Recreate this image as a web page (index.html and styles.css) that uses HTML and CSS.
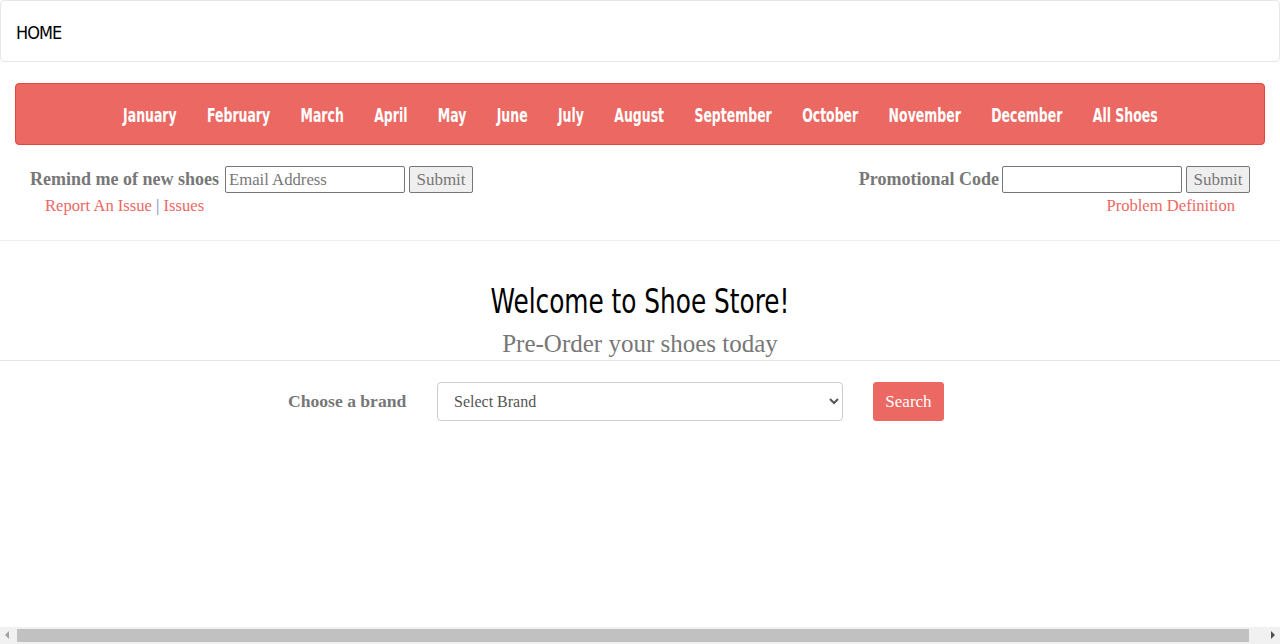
FILE: index.html
```html
<!DOCTYPE html>
<html>
<head>
<meta charset="utf-8">
<title>Shoe Store</title>
<link rel="stylesheet" href="styles.css">
</head>
<body>
<div class="page">
<header class="topbar"><span class="home">HOME</span></header>
<nav class="months">
  <div class="months-list">
    <a>January</a><a>February</a><a>March</a><a>April</a><a>May</a><a>June</a><a>July</a><a>August</a><a>September</a><a>October</a><a>November</a><a>December</a><a>All Shoes</a>
  </div>
</nav>
<section class="forms">
  <div class="formcol left">
    <div class="formline">
      <label class="lbl">Remind me of new shoes</label>
      <input class="txt" type="text" placeholder="Email Address">
      <button class="btn">Submit</button>
    </div>
    <div class="links"><a>Report An Issue</a> <span class="sep">|</span> <a>Issues</a></div>
  </div>
  <div class="formcol right">
    <div class="formline">
      <label class="lbl">Promotional Code</label>
      <input class="txt" type="text">
      <button class="btn">Submit</button>
    </div>
    <div class="links links-right"><a>Problem Definition</a></div>
  </div>
</section>
<section class="welcome">
  <h1 class="title">Welcome to Shoe Store!</h1>
  <p class="subtitle">Pre-Order your shoes today</p>
</section>
<div class="brandrow">
  <label class="brandlbl">Choose a brand</label>
  <select class="brandsel"><option>Select Brand</option></select>
  <button class="search">Search</button>
</div>
</div>
<div class="hscroll">
  <span class="arrow arrow-left"></span>
  <span class="thumb"></span>
  <span class="arrow arrow-right"></span>
</div>
</body>
</html>
```
FILE: styles.css
```css
html, body { margin: 0; padding: 0; overflow: hidden; }
body { font-family: "Liberation Serif", Georgia, serif; background: #fff; color: #777; }
.page { height: 627px; }

.topbar {
  height: 60px;
  border: 1px solid #e7e7e7;
  border-radius: 4px;
  display: flex;
  align-items: center;
  padding-left: 15px;
}
.home {
  font-family: "DejaVu Sans Condensed", "DejaVu Sans", sans-serif;
  font-size: 18px;
  letter-spacing: -1px;
  color: #000;
  padding-top: 2px;
}

.months {
  margin: 21px 15px 0;
  height: 60px;
  background: #ec6863;
  border: 1px solid #e2463f;
  border-radius: 4px;
  display: flex;
  justify-content: center;
  align-items: center;
}
.months-list {
  flex: none;
  display: flex;
  white-space: nowrap;
  transform: scaleX(0.73);
  transform-origin: center;
}
.months a {
  font-family: "DejaVu Sans Condensed", "DejaVu Sans", sans-serif;
  font-weight: bold;
  font-size: 19px;
  color: #fff;
  padding: 1px 20.8px 0;
}

.forms {
  display: flex;
  justify-content: space-between;
  padding: 21px 30px 0 30px;
  height: 74px;
  border-bottom: 1px solid #eee;
}
.formline { display: flex; align-items: center; }
.lbl { font-weight: bold; font-size: 18px; color: #777; margin-right: 6px; }
.txt {
  width: 180px; height: 27px; box-sizing: border-box;
  border: 1px solid #767676; border-radius: 2px;
  font-family: "Liberation Serif", serif; font-size: 16.7px; color: #777;
  padding: 0 3px; margin: 0 4px 0 0;
}
.txt::placeholder { color: #777; }
.btn {
  height: 27px; width: 64px; box-sizing: border-box;
  border: 1px solid #767676; border-radius: 2px;
  background: #efefef; color: #777;
  font-family: "Liberation Serif", serif; font-size: 17px;
  padding: 0; margin: 0;
}
.right .lbl { margin-right: 3px; }
.links { padding: 3px 0 0 15px; font-size: 16.6px; }
.links a { color: #ec6863; }
.sep { color: #6a8cb4; }
.links-right { text-align: right; padding: 3px 15px 0 0; }

.welcome {
  text-align: center;
  border-bottom: 1px solid #e5e5e5;
  padding-top: 40px;
}
.title {
  margin: 0 0 3px;
  font-family: "DejaVu Sans Condensed", "DejaVu Sans", sans-serif;
  font-weight: normal;
  font-size: 33px;
  color: #000;
  line-height: 42px;
  transform: scaleX(0.835);
}
.subtitle {
  margin: 0;
  font-size: 25px;
  color: #777;
  line-height: 36px;
  height: 34px;
}

.brandrow {
  margin: 21px -15px 0;
  display: flex;
  align-items: center;
  padding-left: 303px;
}
.brandlbl { font-weight: bold; font-size: 17.6px; color: #777; width: 149px; }
.brandsel {
  width: 406px; height: 39px; box-sizing: border-box;
  border: 1px solid #ccc; border-radius: 4px; background: #fff;
  font-family: "Liberation Serif", serif; font-size: 16px; color: #555;
  padding: 0 12px;
}
.search {
  margin-left: 30px;
  width: 71px; height: 39px;
  background: #ec6863; border: 1px solid #ec6863; border-radius: 3px;
  color: #fff; font-family: "Liberation Serif", serif; font-size: 17px;
}

.hscroll {
  position: fixed; left: 0; right: 0; bottom: 0;
  height: 17px; background: #f1f1f1;
  display: flex; align-items: center; justify-content: space-between;
}
.thumb {
  display: block; height: 13px; width: 1232px; background: #c1c1c1;
  margin-right: auto;
}
.arrow { display: block; width: 17px; height: 17px; position: relative; flex: none; }
.arrow::after {
  content: ""; position: absolute; top: 4px;
  border-top: 4px solid transparent; border-bottom: 4px solid transparent;
}
.arrow-left::after { left: 5px; border-right: 4px solid #a3a3a3; }
.arrow-right::after { right: 5px; border-left: 4px solid #505050; }
```
